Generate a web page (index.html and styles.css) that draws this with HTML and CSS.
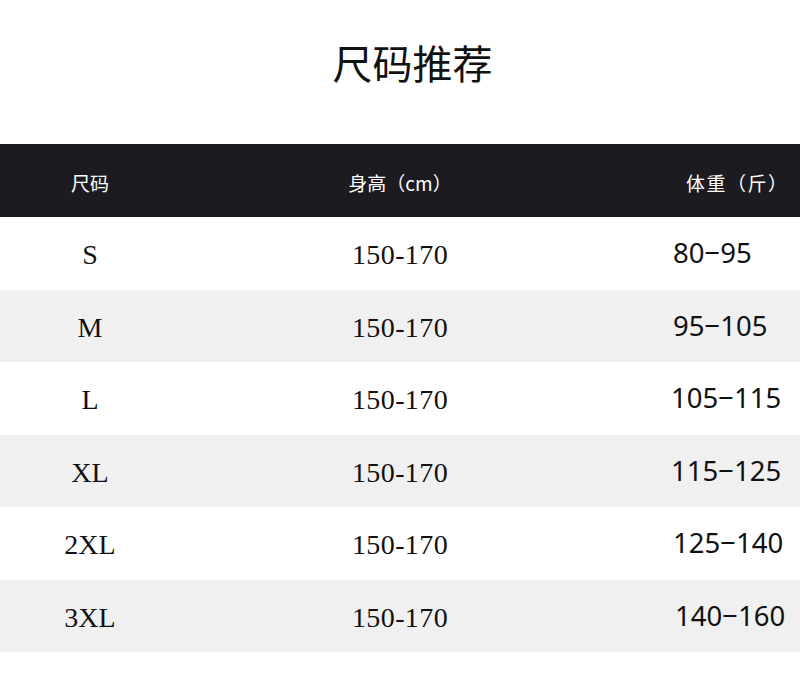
FILE: index.html
```html
<!DOCTYPE html>
<html lang="zh">
<head>
<meta charset="utf-8">
<link rel="stylesheet" href="styles.css">
</head>
<body>
<div class="page">
  <h1 class="title">尺码推荐</h1>
  <div class="table">
    <div class="row head">
      <div class="c1">尺码</div>
      <div class="c2">身高（cm）</div>
      <div class="c3">体重（斤）</div>
    </div>
    <div class="row">
      <div class="c1">S</div><div class="c2">150-170</div><div class="c3">80−95</div>
    </div>
    <div class="row alt">
      <div class="c1">M</div><div class="c2">150-170</div><div class="c3">95−105</div>
    </div>
    <div class="row">
      <div class="c1">L</div><div class="c2">150-170</div><div class="c3 left">105−115</div>
    </div>
    <div class="row alt">
      <div class="c1">XL</div><div class="c2">150-170</div><div class="c3 left">115−125</div>
    </div>
    <div class="row">
      <div class="c1">2XL</div><div class="c2">150-170</div><div class="c3">125−140</div>
    </div>
    <div class="row alt">
      <div class="c1">3XL</div><div class="c2">150-170</div><div class="c3 shift">140−160</div>
    </div>
  </div>
</div>
</body>
</html>
```

FILE: styles.css
```css
html, body {
  margin: 0;
  padding: 0;
  background: #ffffff;
}

.page {
  width: 800px;
}

.title {
  margin: 0;
  height: 144px;
  display: flex;
  align-items: center;
  justify-content: center;
  padding-left: 25px;
  padding-bottom: 20px;
  box-sizing: border-box;
  font-family: "Noto Sans CJK SC", "Noto Sans", sans-serif;
  font-weight: 400;
  font-size: 40px;
  color: #111111;
}

.table {
  display: flex;
  flex-direction: column;
}

.row {
  height: 72.5px;
  display: grid;
  grid-template-columns: 180px 440px 180px;
  align-items: center;
  background: #ffffff;
  color: #111111;
}

.row.alt {
  background: #f0f0f0;
}

.row .c1 {
  text-align: center;
  font-family: "Liberation Serif", serif;
  font-size: 28px;
  padding-top: 4px;
}

.row .c2 {
  text-align: center;
  font-family: "Liberation Serif", serif;
  font-size: 28px;
  letter-spacing: 0.4px;
  padding-top: 4px;
}

.row .c3 {
  padding-left: 53px;
  padding-bottom: 1px;
  font-family: "Noto Sans", "Liberation Sans", sans-serif;
  font-size: 27.5px;
}

.row .c3.left {
  padding-left: 51px;
}

.row .c3.shift {
  padding-left: 55px;
}

.row.head {
  height: 73px;
  background: #1c1b21;
  color: #ffffff;
}

.row.head > div {
  font-family: "Noto Sans CJK SC", sans-serif;
  font-size: 19px;
  letter-spacing: 0;
  padding-top: 3px;
  padding-bottom: 0;
}

.row.head .c2 {
  padding-left: 0;
}

.row.head .c3 {
  padding-left: 66px;
  letter-spacing: 1.5px;
}
```
